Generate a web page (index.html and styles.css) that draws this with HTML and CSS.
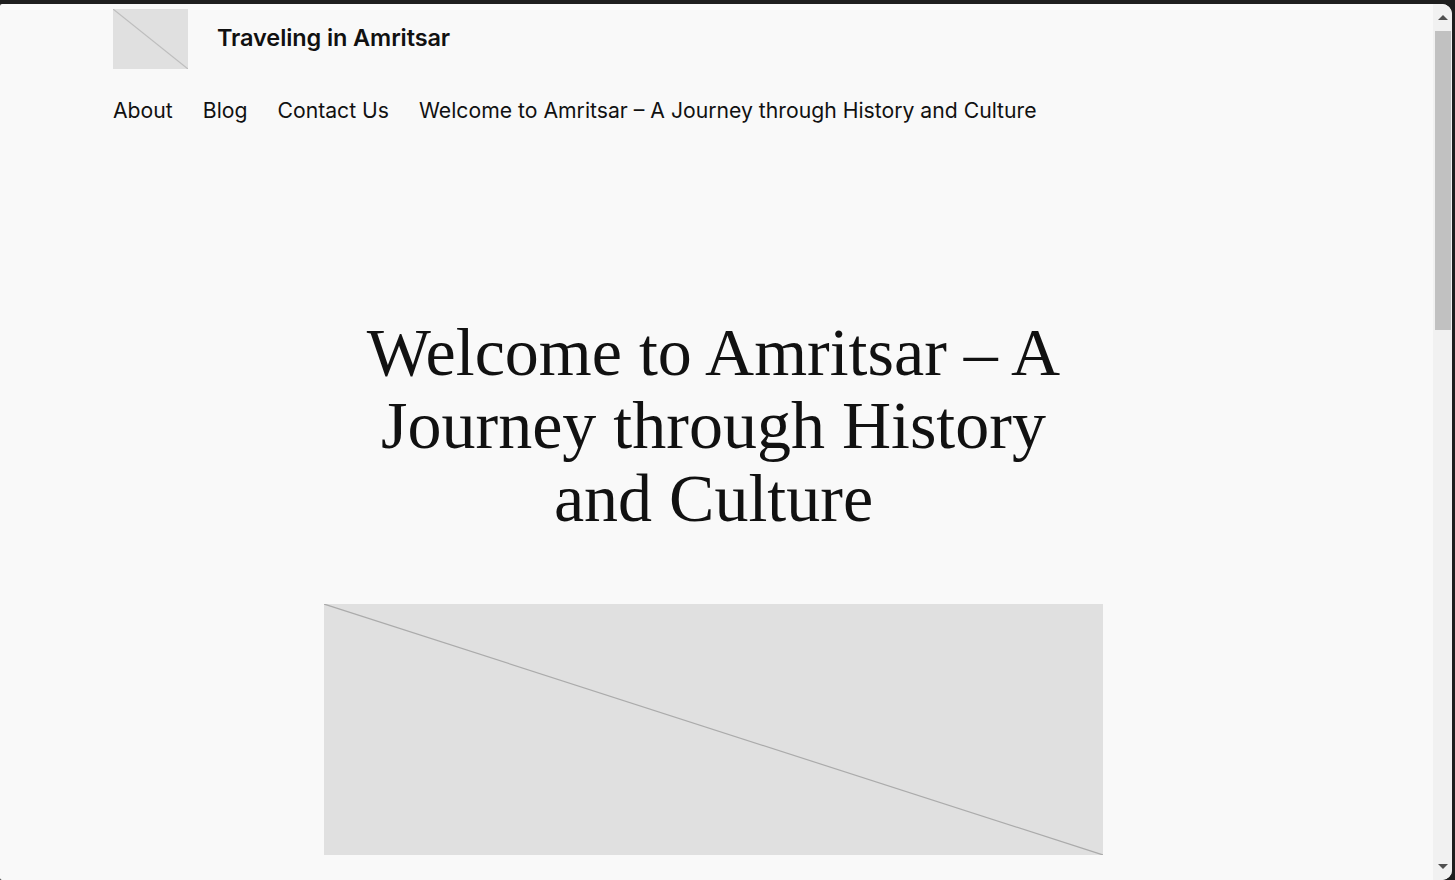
FILE: index.html
```html
<!DOCTYPE html>
<html lang="en">
<head>
<meta charset="utf-8">
<title>Traveling in Amritsar</title>
<link rel="stylesheet" href="styles.css">
</head>
<body>
<div class="window">
  <div class="page">
    <header class="site-header">
      <div class="brand">
        <div class="logo">
          <svg viewBox="0 0 75 60" preserveAspectRatio="none" width="75" height="60"><line x1="0" y1="0" x2="75" y2="60" stroke="#bdbdbd" stroke-width="1.2"/></svg>
        </div>
        <a class="site-title" href="#">Traveling in Amritsar</a>
      </div>
      <nav class="nav">
        <a href="#">About</a>
        <a href="#">Blog</a>
        <a href="#">Contact Us</a>
        <a href="#">Welcome to Amritsar – A Journey through History and Culture</a>
      </nav>
    </header>
    <main class="main">
      <h1 class="title">Welcome to Amritsar – A Journey through History and Culture</h1>
      <div class="featured">
        <svg viewBox="0 0 779 251" preserveAspectRatio="none" width="779" height="251"><line x1="0" y1="0" x2="779" y2="251" stroke="#ababab" stroke-width="1.2"/></svg>
      </div>
    </main>
  </div>
  <div class="scrollbar">
    <div class="sb-btn"><span class="arrow-up"></span></div>
    <div class="sb-track"><div class="sb-thumb"></div></div>
    <div class="sb-btn"><span class="arrow-down"></span></div>
  </div>
</div>
</body>
</html>
```
FILE: styles.css
```css
html, body {
  margin: 0;
  padding: 0;
  height: 100%;
  overflow: hidden;
}
body {
  background: #1e1e1e;
  font-family: Inter, "Noto Sans", sans-serif;
  color: #111;
}
.window {
  margin-top: 4px;
  margin-right: 3px;
  height: 876px;
  display: flex;
  background: #f9f9f9;
  border-radius: 2px 10px 10px 2px;
  overflow: hidden;
}
.page {
  flex: 1;
  min-width: 0;
}
.site-header {
  padding: 5px 113px 0;
}
.brand {
  display: flex;
  align-items: flex-start;
  gap: 29px;
}
.logo {
  width: 75px;
  height: 60px;
  background: #e0e0e0;
  display: flex;
}
.site-title {
  font-size: 23.5px;
  font-weight: 600;
  color: #111;
  text-decoration: none;
  margin-top: 14px;
  letter-spacing: -0.1px;
}
.nav {
  display: flex;
  gap: 30px;
  margin-top: 28px;
}
.nav a {
  font-size: 21.2px;
  color: #111;
  text-decoration: none;
}
.main {
  display: flex;
  flex-direction: column;
  align-items: center;
  padding-top: 193px;
  padding-right: 6px;
}
.title {
  font-family: "Liberation Serif", "Times New Roman", serif;
  font-weight: 400;
  font-size: 68px;
  line-height: 73px;
  text-align: center;
  width: 720px;
  margin: 0;
  color: #111;
}
.featured {
  margin-top: 69px;
  width: 779px;
  height: 251px;
  background: #e0e0e0;
  display: flex;
}
.scrollbar {
  width: 19px;
  display: flex;
  flex-direction: column;
  background: #f1f1f1;
}
.sb-btn {
  height: 27px;
  display: flex;
  align-items: center;
  justify-content: center;
}
.arrow-up, .arrow-down {
  width: 0;
  height: 0;
  border-left: 5px solid transparent;
  border-right: 5px solid transparent;
}
.arrow-up { border-bottom: 5px solid #505050; }
.arrow-down { border-top: 5px solid #505050; }
.sb-track {
  flex: 1;
  padding: 0 1px 0 2px;
}
.sb-thumb {
  height: 299px;
  background: #c1c1c1;
}
```
